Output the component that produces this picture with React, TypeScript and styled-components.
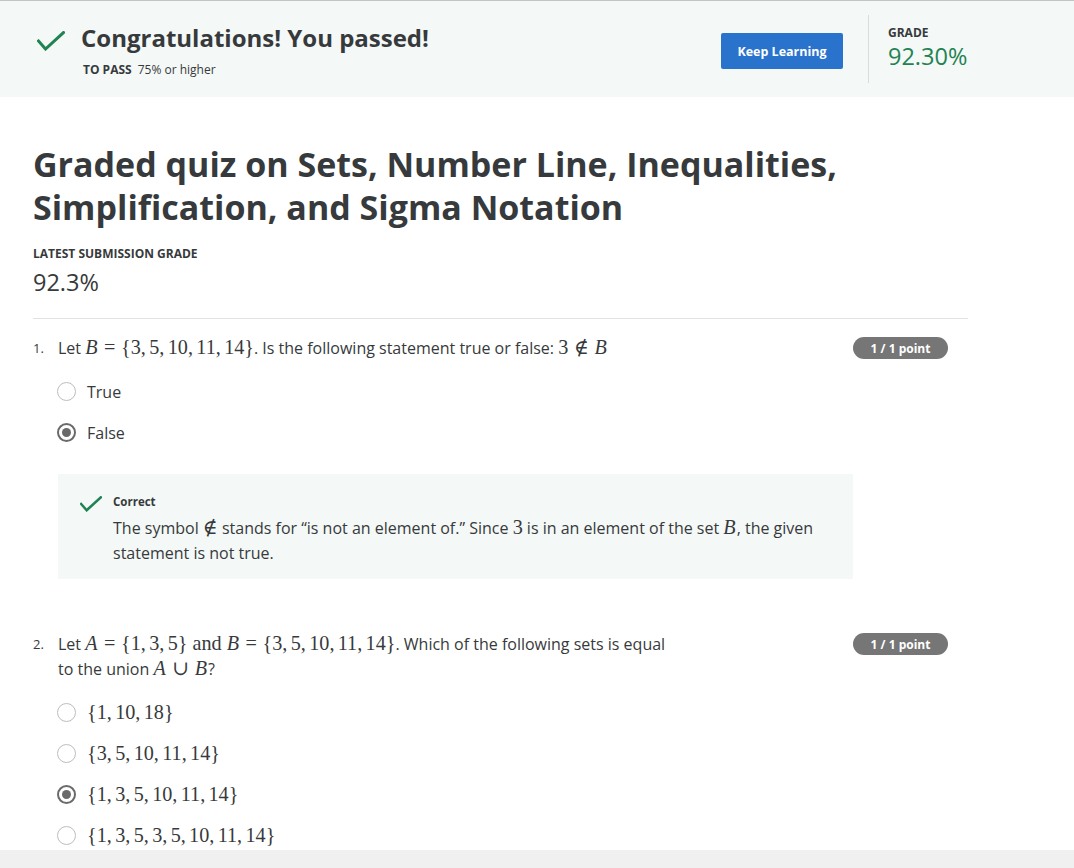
import React from "react";
import styled, { createGlobalStyle } from "styled-components";

const GlobalStyle = createGlobalStyle`
  html, body { margin: 0; padding: 0; background: #ffffff; }
  body {
    font-family: "Open Sans", "Noto Sans", Arial, sans-serif;
    color: #373a3c;
    -webkit-font-smoothing: antialiased;
  }
  * { box-sizing: border-box; }
`;

const Page = styled.div`
  width: 1074px;
  height: 868px;
  display: flex;
  flex-direction: column;
  overflow: hidden;
  border-top: 1px solid #c4c4c4;
`;

const Header = styled.header`
  flex: 0 0 96px;
  display: flex;
  align-items: flex-start;
  background: #f4f8f6;
  padding-left: 37px;
`;

const HeaderLeft = styled.div`
  flex: 1;
  display: flex;
  gap: 16px;
  margin-top: 21px;
`;

const CheckWrap = styled.div`
  padding-top: 9px;
  display: flex;
`;

const HeaderTexts = styled.div`
  display: flex;
  flex-direction: column;
  gap: 8px;
`;

const PassTitle = styled.h1`
  margin: 0;
  font-size: 24px;
  line-height: 32px;
  font-weight: 700;
  color: #373a3c;
`;

const PassRow = styled.div`
  font-size: 12px;
  line-height: 16px;
  padding-left: 2px;
  color: #373a3c;
`;

const PassLabel = styled.span`
  font-weight: 700;
  margin-right: 6px;
`;

const PrimaryButton = styled.button`
  margin-top: 32px;
  width: 122px;
  height: 36px;
  border: none;
  border-radius: 2px;
  background: #2a73cc;
  color: #ffffff;
  font-family: "Open Sans", Arial, sans-serif;
  font-weight: 700;
  font-size: 12.5px;
  cursor: pointer;
`;

const VDivider = styled.div`
  width: 1px;
  height: 68px;
  margin: 14px 19px 0 25px;
  background: #dcdcdc;
`;

const GradeBox = styled.div`
  width: 186px;
  margin-top: 24px;
  display: flex;
  flex-direction: column;
`;

const SmallCaps = styled.div`
  font-size: 12px;
  line-height: 16px;
  font-weight: 700;
  text-transform: uppercase;
  color: #373a3c;
`;

const GradeValue = styled.div<{ $green?: boolean }>`
  font-size: 23.5px;
  line-height: 30px;
  color: ${(p) => (p.$green ? "#1f8354" : "#373a3c")};
`;

const Main = styled.main`
  flex: 1;
  overflow: hidden;
  padding: 0 106px 0 33px;
`;

const QuizTitle = styled.h2`
  margin: 46px 0 0;
  font-size: 34px;
  line-height: 43px;
  font-weight: 700;
  color: #373a3c;
`;

const Latest = styled.div`
  margin-top: 17px;
  display: flex;
  flex-direction: column;
  gap: 5px;
`;

const HRule = styled.hr`
  margin: 21px 0 0;
  border: none;
  border-top: 1px solid #e1e1e1;
`;

const QuestionRow = styled.section<{ $top: number }>`
  display: flex;
  margin-top: ${(p) => p.$top}px;
  padding-right: 20px;
`;

const QNum = styled.div`
  width: 25px;
  font-size: 13px;
  line-height: 25px;
`;

const QBody = styled.div`
  flex: 1;
`;

const QText = styled.div`
  font-size: 16px;
  line-height: 25px;
  max-width: 624px;
`;

const Badge = styled.div`
  margin-top: 1px;
  width: 95px;
  height: 22px;
  border-radius: 11px;
  background: #767676;
  color: #ffffff;
  font-size: 12px;
  font-weight: 700;
  display: flex;
  align-items: center;
  justify-content: center;
`;

const Options = styled.div`
  margin-top: 10px;
  display: flex;
  flex-direction: column;
`;

const Option = styled.label`
  height: 41px;
  display: flex;
  align-items: center;
  gap: 11px;
  font-size: 16px;
`;

const Radio = styled.span<{ $checked?: boolean }>`
  width: 19px;
  height: 19px;
  border-radius: 50%;
  flex: 0 0 19px;
  margin-left: -1px;
  border: ${(p) => (p.$checked ? "2px solid #6a6a6a" : "1.5px solid #bdbdbd")};
  display: flex;
  align-items: center;
  justify-content: center;
  &::after {
    content: "";
    display: ${(p) => (p.$checked ? "block" : "none")};
    width: 9px;
    height: 9px;
    border-radius: 50%;
    background: #6a6a6a;
  }
`;

const Feedback = styled.div`
  margin-top: 21px;
  background: #f4f8f6;
  display: flex;
  gap: 11px;
  padding: 20px 30px 13px 22px;
`;

const FeedbackCheck = styled.div`
  padding-top: 1px;
`;

const FeedbackBody = styled.div`
  flex: 1;
`;

const FeedbackTitle = styled.div`
  font-size: 11.5px;
  line-height: 16px;
  font-weight: 700;
  margin-bottom: 6px;
`;

const FeedbackText = styled.div`
  font-size: 16px;
  line-height: 25px;
`;

const Footer = styled.div`
  flex: 0 0 18px;
  background: #f0f0f0;
`;

const MathRoot = styled.span`
  font-family: "Liberation Serif", "DejaVu Serif", "Times New Roman", serif;
  font-size: 1.26em;
  line-height: 1;
  white-space: nowrap;
`;

const MVar = styled.i`
  font-style: italic;
  margin-right: 0.05em;
`;

const MRel = styled.span`
  margin: 0 0.2778em;
`;

const MPunct = styled.span`
  margin-right: 0.1667em;
`;

const CheckIcon: React.FC<{ w: number; h: number; sw: number }> = ({ w, h, sw }) => (
  <svg width={w} height={h} viewBox="0 0 28 20" fill="none">
    <polyline
      points="1.5,10 8.5,18 26.5,1.5"
      stroke="#1f8354"
      strokeWidth={sw}
      strokeLinecap="square"
      strokeLinejoin="miter"
    />
  </svg>
);

const MathSet: React.FC<{ nums: number[] }> = ({ nums }) => (
  <>
    {"{"}
    {nums.map((n, i) => (
      <React.Fragment key={i}>
        {n}
        {i < nums.length - 1 && <MPunct>,</MPunct>}
      </React.Fragment>
    ))}
    {"}"}
  </>
);

const SetOption: React.FC<{ nums: number[]; checked?: boolean }> = ({ nums, checked }) => (
  <Option>
    <Radio $checked={checked} />
    <MathRoot>
      <MathSet nums={nums} />
    </MathRoot>
  </Option>
);

export default function App() {
  return (
    <>
      <GlobalStyle />
      <Page>
        <Header>
          <HeaderLeft>
            <CheckWrap>
              <CheckIcon w={28} h={20} sw={3} />
            </CheckWrap>
            <HeaderTexts>
              <PassTitle>Congratulations! You passed!</PassTitle>
              <PassRow>
                <PassLabel>TO PASS</PassLabel>75% or higher
              </PassRow>
            </HeaderTexts>
          </HeaderLeft>
          <PrimaryButton>Keep Learning</PrimaryButton>
          <VDivider />
          <GradeBox>
            <SmallCaps>Grade</SmallCaps>
            <GradeValue $green>92.30%</GradeValue>
          </GradeBox>
        </Header>

        <Main>
          <QuizTitle>
            Graded quiz on Sets, Number Line, Inequalities,
            <br />
            Simplification, and Sigma Notation
          </QuizTitle>
          <Latest>
            <SmallCaps>Latest Submission Grade</SmallCaps>
            <GradeValue>92.3%</GradeValue>
          </Latest>
          <HRule />

          <QuestionRow $top={17}>
            <QNum>1.</QNum>
            <QBody>
              <QText>
                Let{" "}
                <MathRoot>
                  <MVar>B</MVar>
                  <MRel>=</MRel>
                  <MathSet nums={[3, 5, 10, 11, 14]} />
                </MathRoot>
                . Is the following statement true or false:{" "}
                <MathRoot>
                  3<MRel>∉</MRel>
                  <MVar>B</MVar>
                </MathRoot>
              </QText>
              <Options>
                <Option>
                  <Radio />
                  True
                </Option>
                <Option>
                  <Radio $checked />
                  False
                </Option>
              </Options>
              <Feedback>
                <FeedbackCheck>
                  <CheckIcon w={22} h={16} sw={3.2} />
                </FeedbackCheck>
                <FeedbackBody>
                  <FeedbackTitle>Correct</FeedbackTitle>
                  <FeedbackText>
                    The symbol <MathRoot>∉</MathRoot> stands for “is not an element of.” Since{" "}
                    <MathRoot>3</MathRoot> is in an element of the set{" "}
                    <MathRoot>
                      <MVar>B</MVar>
                    </MathRoot>
                    , the given statement is not true.
                  </FeedbackText>
                </FeedbackBody>
              </Feedback>
            </QBody>
            <Badge>1 / 1 point</Badge>
          </QuestionRow>

          <QuestionRow $top={53}>
            <QNum>2.</QNum>
            <QBody>
              <QText>
                Let{" "}
                <MathRoot>
                  <MVar>A</MVar>
                  <MRel>=</MRel>
                  <MathSet nums={[1, 3, 5]} /> and <MVar>B</MVar>
                  <MRel>=</MRel>
                  <MathSet nums={[3, 5, 10, 11, 14]} />
                </MathRoot>
                . Which of the following sets is equal to the union{" "}
                <MathRoot>
                  <MVar>A</MVar>
                  <MRel>∪</MRel>
                  <MVar>B</MVar>
                </MathRoot>
                ?
              </QText>
              <Options>
                <SetOption nums={[1, 10, 18]} />
                <SetOption nums={[3, 5, 10, 11, 14]} />
                <SetOption nums={[1, 3, 5, 10, 11, 14]} checked />
                <SetOption nums={[1, 3, 5, 3, 5, 10, 11, 14]} />
              </Options>
            </QBody>
            <Badge>1 / 1 point</Badge>
          </QuestionRow>
        </Main>
        <Footer />
      </Page>
    </>
  );
}
